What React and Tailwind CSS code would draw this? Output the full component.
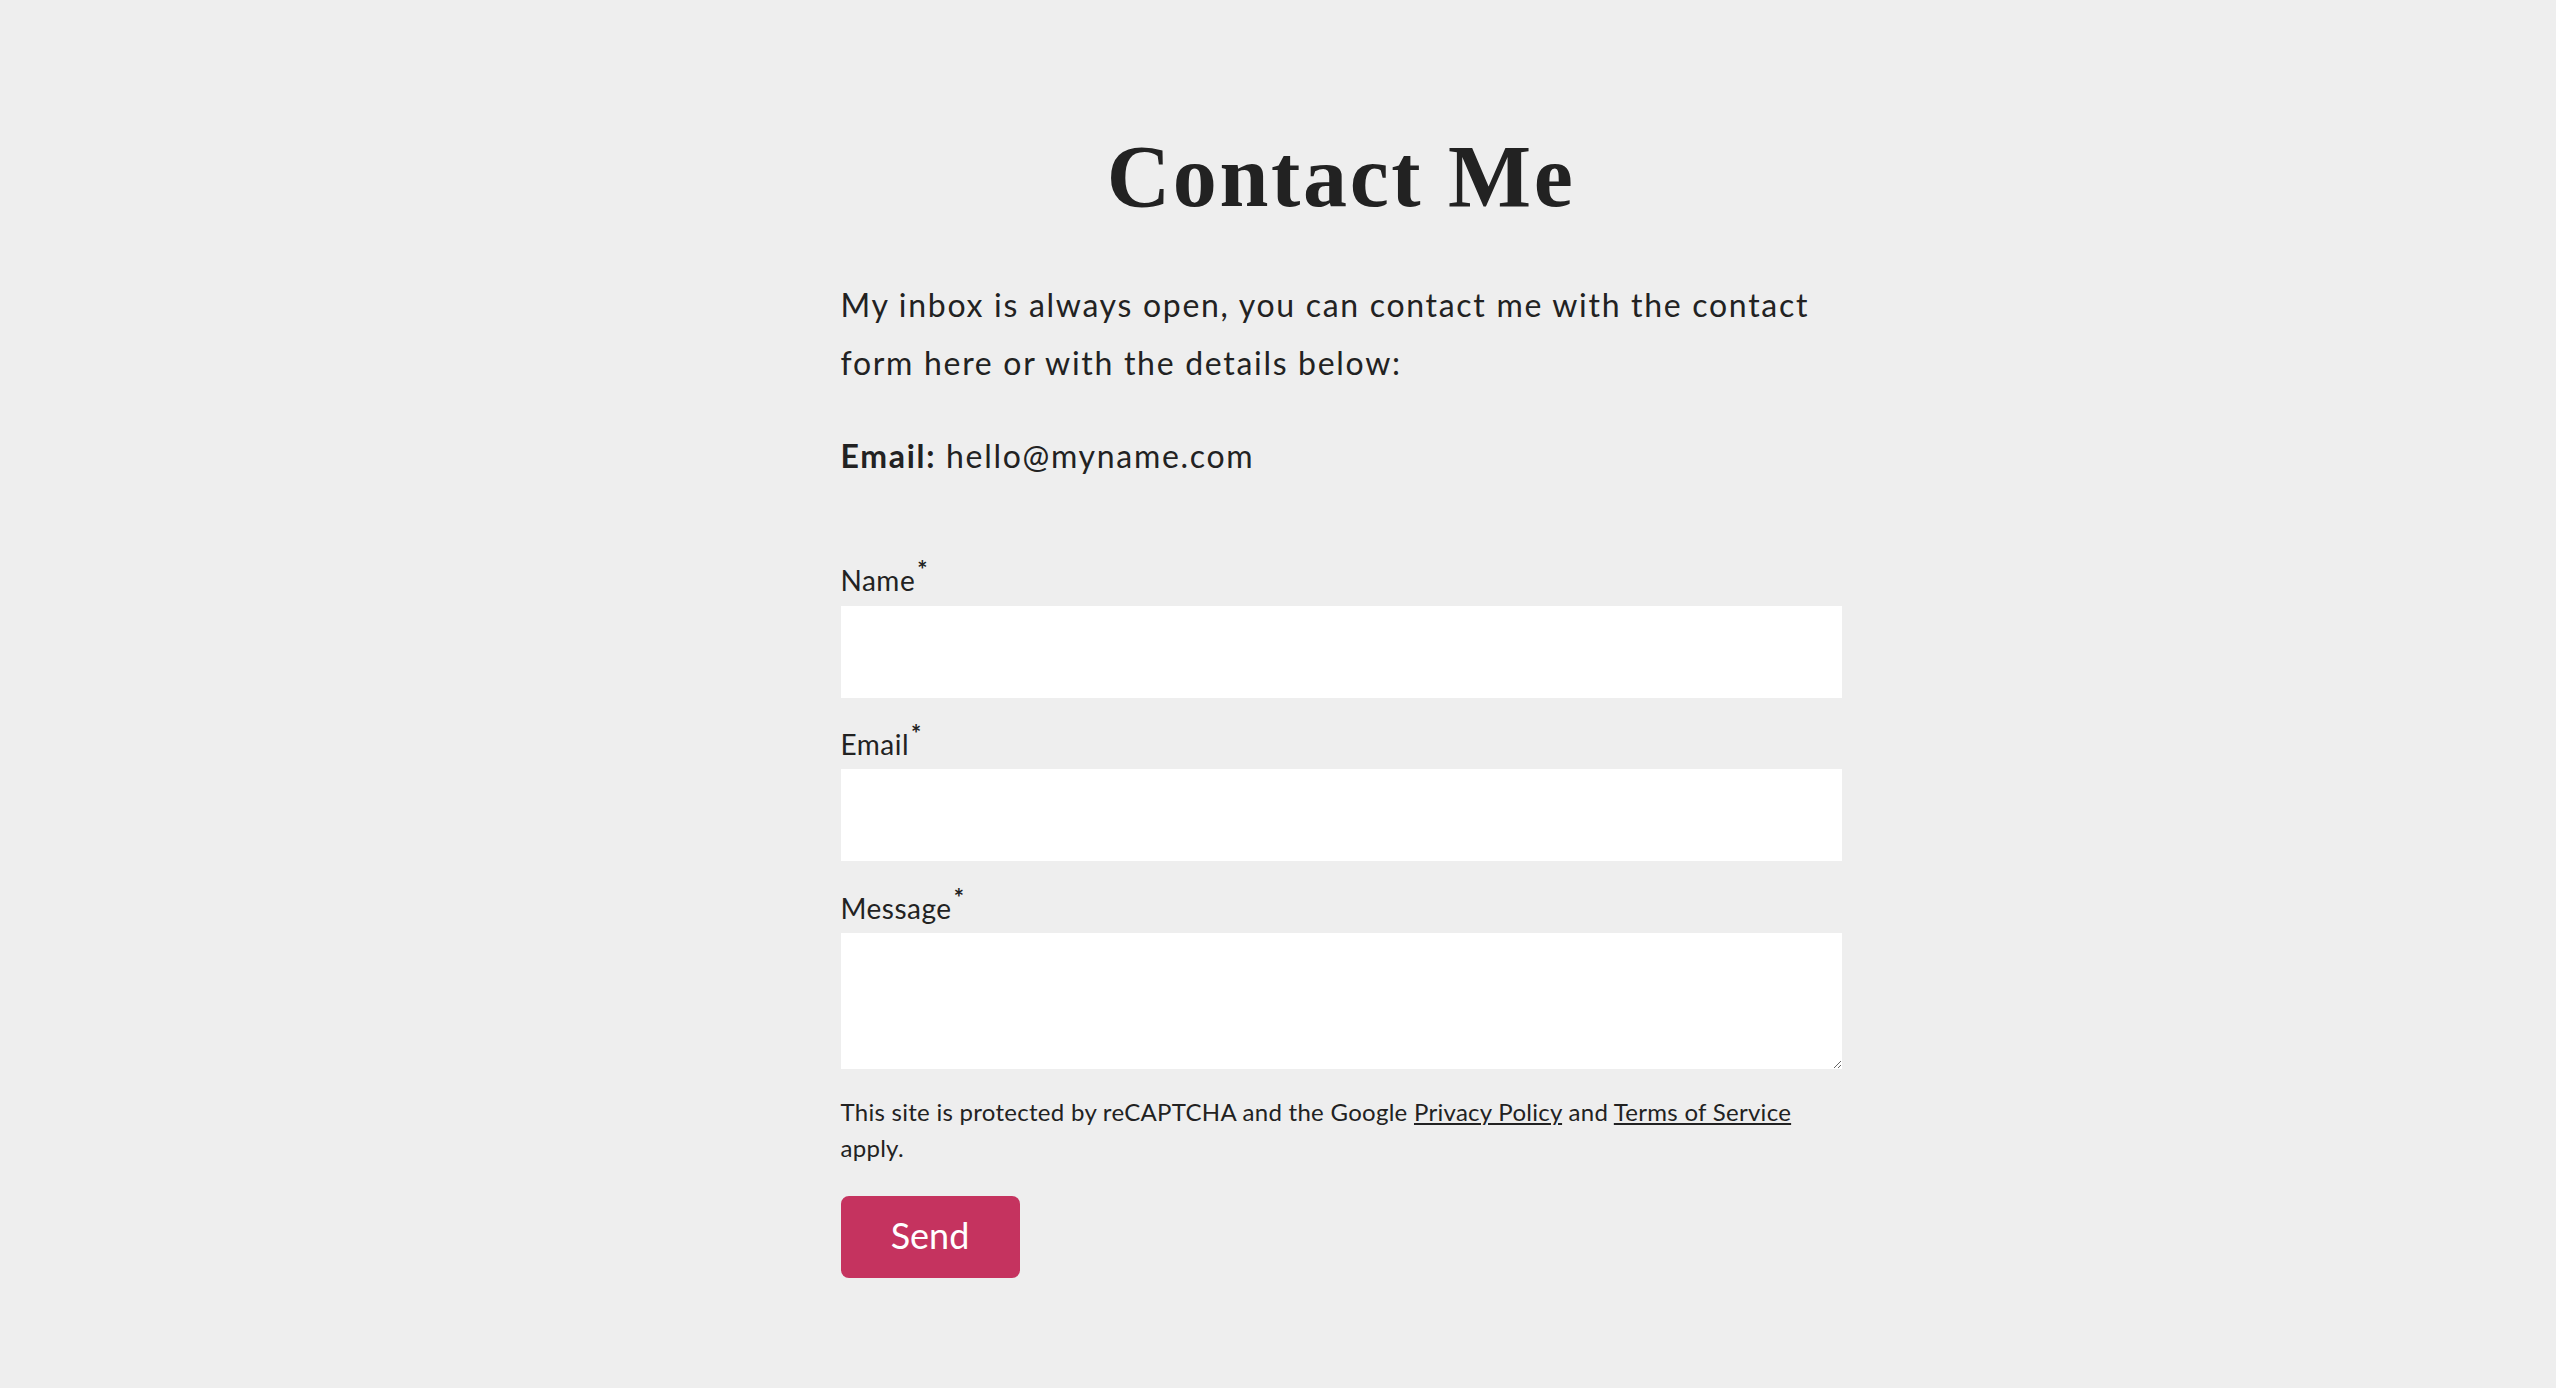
export default function App() {
  const sans = { fontFamily: 'Lato, "Open Sans", sans-serif' };

  return (
    <div className="min-h-[1388px] w-full bg-[#eeeeee] text-[#222222]" style={sans}>
      <div className="flex justify-center pl-[126px]">
        <div className="w-[1001px] pt-[133px]">
          <h1
            className="text-center text-[88px] font-bold leading-[88px] tracking-[0.03em]"
            style={{ fontFamily: '"Liberation Serif", "Times New Roman", serif' }}
          >
            Contact Me
          </h1>

          <p className="mt-[55px] text-[32px] leading-[58px] tracking-[1.7px]">
            My inbox is always open, you can contact me with the contact form here or with the details below:
          </p>

          <p className="mt-[35px] text-[32px] leading-[58px] tracking-[1.7px]">
            <span className="font-bold">Email:</span> hello@myname.com
          </p>

          <form className="mt-[77px] flex flex-col">
            <label className="text-[28px] leading-[36px] tracking-[0.5px]">
              Name<sup className="ml-[2px] text-[24px] font-bold">*</sup>
            </label>
            <input type="text" className="mt-[8px] h-[92px] w-full bg-white px-4 text-[28px] outline-none" />

            <label className="mt-[28px] text-[28px] leading-[36px] tracking-[0.5px]">
              Email<sup className="ml-[2px] text-[24px] font-bold">*</sup>
            </label>
            <input type="email" className="mt-[7px] h-[92px] w-full bg-white px-4 text-[28px] outline-none" />

            <label className="mt-[29px] text-[28px] leading-[36px] tracking-[0.5px]">
              Message<sup className="ml-[2px] text-[24px] font-bold">*</sup>
            </label>
            <textarea className="mt-[7px] h-[136px] w-full resize-y bg-white p-4 text-[28px] outline-none" />

            <p className="mt-[25px] text-[24px] leading-[36px] tracking-[0.28px]">
              This site is protected by reCAPTCHA and the Google{' '}
              <a href="#" className="underline">Privacy Policy</a> and{' '}
              <a href="#" className="underline">Terms of Service</a> apply.
            </p>

            <div className="mt-[30px]">
              <button
                type="button"
                className="h-[82px] w-[179px] rounded-[8px] bg-[#c5335f] pb-[4px] text-[36px] text-white"
              >
                Send
              </button>
            </div>
          </form>
        </div>
      </div>
    </div>
  );
}
